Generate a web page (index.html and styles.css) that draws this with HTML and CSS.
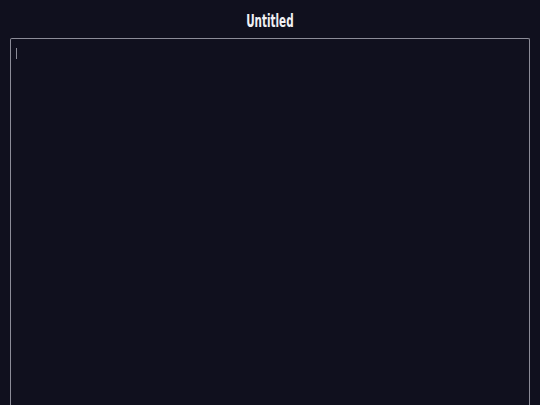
FILE: index.html
```html
<!DOCTYPE html>
<html>
<head>
<meta charset="utf-8">
<link rel="stylesheet" href="styles.css">
</head>
<body>
<div class="app">
  <header class="title"><span class="title-text">Untitled</span></header>
  <div class="editor"><span class="caret"></span></div>
</div>
</body>
</html>
```
FILE: styles.css
```css
html, body {
  margin: 0;
  padding: 0;
  background: #10101e;
  height: 100%;
  overflow: hidden;
}
.app {
  display: flex;
  flex-direction: column;
  padding: 0 10px;
  height: 100%;
  box-sizing: border-box;
}
.title {
  flex: 0 0 38px;
  display: flex;
  align-items: center;
  justify-content: center;
  color: #f0f0f4;
  font-family: "DejaVu Sans Condensed", "DejaVu Sans", sans-serif;
  font-weight: 700;
  font-size: 17px;
  padding-top: 3px;
  box-sizing: border-box;
}
.title-text {
  display: inline-block;
  transform: scaleX(0.68);
}
.editor {
  flex: 1 1 auto;
  border: 1px solid #8c8c98;
  border-bottom: none;
  border-radius: 2px 2px 0 0;
  padding: 9px 5px;
  box-sizing: border-box;
}
.caret {
  display: block;
  width: 1px;
  height: 11px;
  background: #8a8a96;
}
```
